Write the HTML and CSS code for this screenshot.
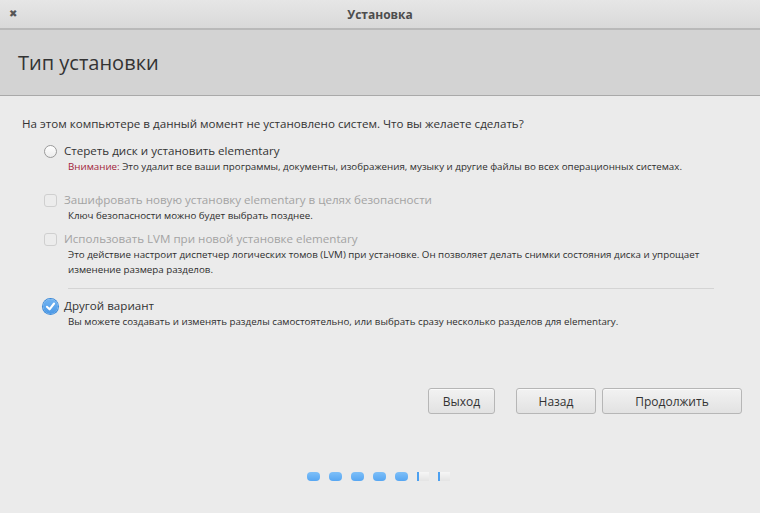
FILE: index.html
```html
<!DOCTYPE html>
<html lang="ru">

<head>
    <meta charset="UTF-8">
    <title>Установка</title>
    <link rel="stylesheet" href="styles.css">
</head>

<body>
    <div class="window">
        <!-- Title bar -->
        <div class="titlebar">
            <span class="close">&#x2716;</span>
            <span class="title">Установка</span>
        </div>

        <!-- Page header -->
        <div class="header">
            <h1>Тип установки</h1>
        </div>

        <div class="content">
            <p class="question">На этом компьютере в данный момент не установлено систем. Что вы желаете сделать?</p>

            <div class="option option-erase">
                <span class="radio"></span>
                <div class="option-body">
                    <div class="option-label">Стереть диск и установить elementary</div>
                    <div class="option-desc"><span class="warn">Внимание:</span> Это удалит все ваши программы, документы, изображения, музыку и другие файлы во всех операционных системах.</div>
                </div>
            </div>

            <div class="option option-disabled">
                <span class="check"></span>
                <div class="option-body">
                    <div class="option-label">Зашифровать новую установку elementary в целях безопасности</div>
                    <div class="option-desc">Ключ безопасности можно будет выбрать позднее.</div>
                </div>
            </div>

            <div class="option option-disabled option-last">
                <span class="check"></span>
                <div class="option-body">
                    <div class="option-label">Использовать LVM при новой установке elementary</div>
                    <div class="option-desc">Это действие настроит диспетчер логических томов (LVM) при установке. Он позволяет делать снимки состояния диска и упрощает изменение размера разделов.</div>
                </div>
            </div>

            <hr class="separator">

            <div class="option option-last">
                <span class="check-on">
                    <svg width="16" height="16" viewBox="0 0 16 16">
                        <path d="M4.2 8.3 L7 11 L11.8 4.8" fill="none" stroke="#fff" stroke-width="2.2" stroke-linecap="round" stroke-linejoin="round"/>
                    </svg>
                </span>
                <div class="option-body">
                    <div class="option-label">Другой вариант</div>
                    <div class="option-desc">Вы можете создавать и изменять разделы самостоятельно, или выбрать сразу несколько разделов для elementary.</div>
                </div>
            </div>
        </div>

        <div class="buttons">
            <button class="btn btn-quit">Выход</button>
            <button class="btn btn-back">Назад</button>
            <button class="btn btn-next">Продолжить</button>
        </div>

        <!-- Step indicator -->
        <div class="steps">
            <span class="dot done"></span>
            <span class="dot done"></span>
            <span class="dot done"></span>
            <span class="dot done"></span>
            <span class="dot done"></span>
            <span class="dot todo"></span>
            <span class="dot todo"></span>
        </div>
    </div>
</body>

</html>
```

FILE: styles.css
```css
/* elementary installer look */
body {
    margin: 0;
    font-family: "Open Sans", "Noto Sans", sans-serif;
    background-color: #ebebeb;
    color: #333;
}

.window {
    width: 760px;
    height: 513px;
    display: flex;
    flex-direction: column;
    background-color: #ebebeb;
}

.titlebar {
    position: relative;
    height: 28px;
    background: linear-gradient(#e6e6e6, #d9d9d9);
    border-bottom: 2px solid #b9b9b9;
    display: flex;
    align-items: center;
    justify-content: center;
}

.close {
    position: absolute;
    left: 9px;
    top: 6px;
    font-size: 10px;
    color: #555;
}

.title {
    font-size: 12px;
    font-weight: bold;
    color: #4d4d4d;
}

.header {
    height: 65px;
    background-color: #d3d3d3;
    border-bottom: 1px solid #a9a9a9;
    display: flex;
    align-items: center;
    padding-left: 18px;
}

.header h1 {
    margin: 0;
    font-size: 20px;
    font-weight: normal;
    color: #333;
    padding-bottom: 1px;
}

.content {
    padding: 20px 22px 0 22px;
}

.question {
    margin: 0 0 11px 0;
    font-size: 11.6px;
    line-height: 16px;
}

.option {
    display: flex;
    align-items: flex-start;
    margin-left: 22px;
    margin-bottom: 8px;
}

.option-erase {
    margin-bottom: 18px;
}

.option-last {
    margin-bottom: 0;
}

.radio,
.check,
.check-on {
    flex: none;
    width: 13px;
    height: 13px;
    margin-top: 2px;
    margin-right: 7px;
    box-sizing: border-box;
}

.radio {
    border: 1px solid #9a9a9a;
    border-radius: 50%;
    background: linear-gradient(#ffffff, #ececec);
}

.check {
    border: 1px solid #cfcfcf;
    border-radius: 3px;
    background-color: #ececec;
}

.check-on {
    width: 15px;
    height: 15px;
    margin-left: -1px;
    margin-right: 6px;
    margin-top: 1px;
    border-radius: 50%;
    background: linear-gradient(#72b4f2, #4a98e6);
    box-shadow: 0 0 0 1px #3c8ad8;
}

.check-on svg {
    display: block;
    width: 15px;
    height: 15px;
}

.option-label {
    font-size: 11.6px;
    line-height: 16px;
}

.option-disabled .option-label {
    color: #a3a3a3;
}

.option-desc {
    margin-left: 4px;
    font-size: 9.75px;
    line-height: 15px;
    color: #2e2e2e;
}

.warn {
    color: #a2243b;
}

.separator {
    margin: 11px 24px 9px 46px;
    border: none;
    border-top: 1px solid #d4d4d4;
}

.buttons {
    display: flex;
    justify-content: flex-end;
    gap: 6px;
    margin-top: 59px;
    padding-right: 18px;
}

.btn {
    height: 26px;
    font-family: "Open Sans", "Noto Sans", sans-serif;
    font-size: 12px;
    color: #333;
    border: 1px solid #b6b6b6;
    border-radius: 3px;
    background: linear-gradient(#f2f2f2, #e2e2e2);
    box-shadow: inset 0 1px 0 #fafafa;
    padding: 0;
}

.btn-quit {
    width: 67px;
    margin-right: 15px;
}

.btn-back {
    width: 80px;
}

.btn-next {
    width: 140px;
}

.steps {
    display: flex;
    justify-content: center;
    gap: 9px;
    margin-top: 58px;
    padding-right: 3px;
}

.dot {
    width: 13px;
    height: 9px;
    border-radius: 4px;
    box-sizing: border-box;
}

.done {
    background: linear-gradient(#7ebff8, #56a6f2);
}

.todo {
    border-radius: 0;
    width: 12px;
    background: linear-gradient(#f6f6f6, #e4e4e4);
    border-left: 2px solid #4ca0f0;
}
```
